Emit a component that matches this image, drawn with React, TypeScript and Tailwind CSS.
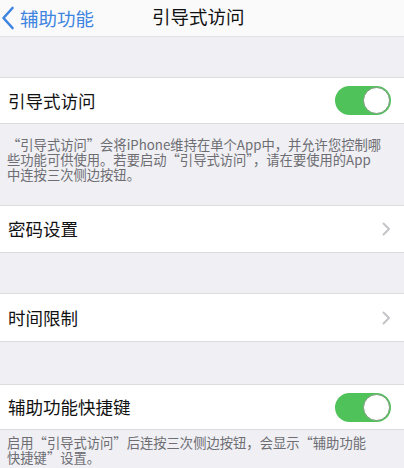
import React from "react";

const font = { fontFamily: '"Noto Sans CJK SC", "Noto Sans", sans-serif' };

function Toggle() {
  return (
    <div className="relative h-[29px] w-[56px] rounded-full bg-[#4fc25a]">
      <div className="absolute right-[1px] top-[1px] h-[27px] w-[27px] rounded-full border border-[#7a9a7a] bg-white" />
    </div>
  );
}

function Chevron() {
  return (
    <svg width="9" height="14" viewBox="0 0 9 14" fill="none">
      <path d="M1.5 1.5 L7 7 L1.5 12.5" stroke="#c4c4c9" strokeWidth="2" strokeLinecap="round" strokeLinejoin="round" />
    </svg>
  );
}

function Row({ label, right, h }: { label: string; right: React.ReactNode; h: string }) {
  return (
    <div className={`flex ${h} items-center justify-between border-y border-[#dcdce0] bg-white pl-[8px] pr-[13px]`}>
      <span className="text-[17.5px] leading-none text-[#111]">{label}</span>
      {right}
    </div>
  );
}

export default function App() {
  return (
    <div className="h-[468px] w-[404px] overflow-hidden bg-[#efeff4]" style={font}>
      <div className="relative flex h-[37px] items-center border-b border-[#e2e2e6] bg-[#fafafa]">
        <div className="flex items-center pl-[1px]">
          <svg width="14" height="24" viewBox="0 0 14 24" fill="none">
            <path d="M11.5 2 L2.5 12 L11.5 22" stroke="#3d84e0" strokeWidth="2.6" strokeLinecap="round" strokeLinejoin="round" />
          </svg>
          <span className="ml-[5px] text-[18.5px] leading-none text-[#3d84e0]">辅助功能</span>
        </div>
        <span className="absolute left-[152px] top-[7px] text-[18.5px] leading-none text-[#111]">引导式访问</span>
      </div>
      <div className="h-[40px]" />
      <div className="flex h-[47px] items-center justify-between border-y border-[#dcdce0] bg-white pl-[8px] pr-[13px]">
        <span className="text-[17.5px] leading-none text-[#111]">引导式访问</span>
        <Toggle />
      </div>
      <div className="h-[81px] whitespace-nowrap pl-[7px] pt-[13px] text-[13.3px] leading-[15px] text-[#6d6d72]">
        “引导式访问”会将iPhone维持在单个App中，并允许您控制哪
        <br />
        些功能可供使用。若要启动“引导式访问”，请在要使用的App
        <br />
        中连按三次侧边按钮。
      </div>
      <Row label="密码设置" right={<Chevron />} h="h-[48px]" />
      <div className="h-[40px]" />
      <Row label="时间限制" right={<Chevron />} h="h-[49px]" />
      <div className="h-[42px]" />
      <div className="flex h-[46px] items-center justify-between border-y border-[#dcdce0] bg-white pl-[8px] pr-[13px]">
        <span className="text-[17.5px] leading-none text-[#111]">辅助功能快捷键</span>
        <Toggle />
      </div>
      <div className="whitespace-nowrap pl-[7px] pt-[5px] text-[13.3px] leading-[15px] text-[#6d6d72]">
        启用“引导式访问”后连按三次侧边按钮，会显示“辅助功能
        <br />
        快捷键”设置。
      </div>
    </div>
  );
}
